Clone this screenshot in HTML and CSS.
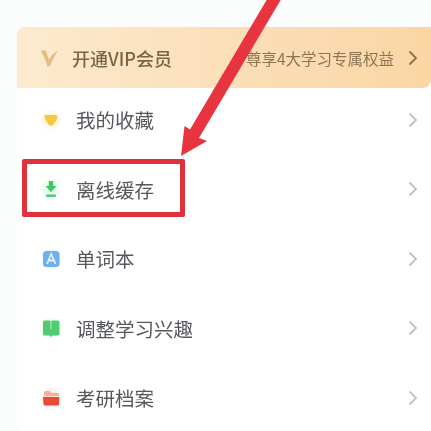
FILE: index.html
```html
<!DOCTYPE html>
<html lang="zh">
<head>
<meta charset="utf-8">
<title>我的</title>
<link rel="stylesheet" href="styles.css">
</head>
<body>
<main class="page">
  <section class="card">
    <div class="vip">
      <svg class="vip-logo" viewBox="0 0 24 24"><path d="M2 3 L8 3 C10 8 11 11 12 14 C14 10 17 6 23 3 C19 9 16 15 13 22 L10 22 C8 15 5 8 2 3 Z" fill="#e3bf82"/></svg>
      <span class="vip-title">开通VIP会员</span>
      <span class="vip-desc">尊享4大学习专属权益</span>
      <svg class="chev chev-vip" viewBox="0 0 10 16"><path d="M1.500 1.500 L8 8 L1.500 14.500" fill="none" stroke="#8a6f4a" stroke-width="1.8"/></svg>
    </div>
    <ul class="list">
      <li class="row">
        <span class="ico ico-yellow"><svg viewBox="0 0 24 24"><path d="M5.500 8.500 C5.500 7.500 6.500 7 7.500 7 L16.500 7 C17.500 7 18.500 7.500 18.500 8.500 C18.500 11.500 14.500 17 12 18 C9.500 17 5.500 11.500 5.500 8.500 Z" fill="#f5c93f"/></svg></span>
        <span class="label">我的收藏</span>
        <svg class="chev" viewBox="0 0 10 16"><path d="M1.500 1.500 L8 8 L1.500 14.500" fill="none" stroke="#bfc1c4" stroke-width="1.8"/></svg>
      </li>
      <li class="row">
        <span class="ico ico-green"><svg viewBox="0 0 24 24"><path d="M9.800 4 H14.200 V9 H17.500 L12 15 L6.500 9 H9.800 Z" fill="#40c765"/><rect x="7" y="17.500" width="10" height="2.500" rx="1" fill="#55c878"/></svg></span>
        <span class="label">离线缓存</span>
        <svg class="chev" viewBox="0 0 10 16"><path d="M1.500 1.500 L8 8 L1.500 14.500" fill="none" stroke="#bfc1c4" stroke-width="1.8"/></svg>
      </li>
      <li class="row">
        <span class="ico ico-blue"><svg viewBox="0 0 24 24"><rect x="4" y="4" width="16.500" height="16" rx="3.500" fill="#6fb0ec"/><path d="M8 17 L12.200 7 L16.500 17 M9.500 13.500 H15" fill="none" stroke="#e3f0fc" stroke-width="1.800"/></svg></span>
        <span class="label">单词本</span>
        <svg class="chev" viewBox="0 0 10 16"><path d="M1.500 1.500 L8 8 L1.500 14.500" fill="none" stroke="#bfc1c4" stroke-width="1.8"/></svg>
      </li>
      <li class="row">
        <span class="ico ico-mint"><svg viewBox="0 0 24 24"><path d="M4 6 C4 5 5 4.500 6 4.500 L11 4.500 L12 5.500 L13 4.500 L18 4.500 C19 4.500 20.500 5 20.500 6 L20.500 18 C20.500 19 19 19.500 18 19.500 L13.500 19.500 L12 21 L10.500 19.500 L6 19.500 C5 19.500 4 19 4 18 Z" fill="#52cc72"/><rect x="11.400" y="5" width="1.200" height="8" fill="#a8e8ba"/></svg></span>
        <span class="label">调整学习兴趣</span>
        <svg class="chev" viewBox="0 0 10 16"><path d="M1.500 1.500 L8 8 L1.500 14.500" fill="none" stroke="#bfc1c4" stroke-width="1.8"/></svg>
      </li>
      <li class="row">
        <span class="ico ico-red"><svg viewBox="0 0 24 24"><path d="M5 7 C5 5.500 6 5 7 5 L10.500 5 L12.500 7 L18.500 7 C19.500 7 20 7.500 20 8.500 L20 10 L5 10 Z" fill="#f4b28e"/><path d="M4 11 L20.500 11 L20 18 C19.900 19 19 19.500 18 19.500 L6.500 19.500 C5.500 19.500 4.600 19 4.500 18 Z" fill="#e94a38"/></svg></span>
        <span class="label">考研档案</span>
        <svg class="chev" viewBox="0 0 10 16"><path d="M1.500 1.500 L8 8 L1.500 14.500" fill="none" stroke="#bfc1c4" stroke-width="1.8"/></svg>
      </li>
    </ul>
  </section>
</main>
<div class="mark-box"></div>
<svg class="mark-arrow" viewBox="0 0 431 431"><path d="M269 -4 L283 -4 L199 138 L207 141 L181 156 L184.500 126 L190 129.500 Z" fill="#e8343f"/></svg>
</body>
</html>
```
FILE: styles.css
```css
html, body {
  margin: 0;
  padding: 0;
}
body {
  width: 431px;
  height: 431px;
  overflow: hidden;
  position: relative;
  background: #fbfcfc;
  font-family: "Noto Sans CJK SC", "Noto Sans", sans-serif;
}
.page {
  padding: 27px 0 0 17px;
  height: 404px;
  overflow: hidden;
}
.card {
  background: #fff;
  border-radius: 8px 0 0 8px;
  height: 100%;
}
.vip {
  height: 61px;
  display: flex;
  align-items: center;
  padding: 0 13px 0 22px;
  background: linear-gradient(90deg, #fdeacf 0%, #fbdfb9 50%, #fad6a4 100%);
  border-radius: 8px 0 8px 0;
  filter: blur(0.5px);
}
.vip-logo {
  width: 20px;
  height: 20px;
  flex: none;
}
.vip-title {
  margin-left: 13px;
  font-size: 18px;
  font-weight: 500;
  color: #7a6547;
}
.vip-desc {
  margin-left: auto;
  font-size: 15.500px;
  color: #8c7452;
}
.chev {
  width: 10px;
  height: 16px;
  flex: none;
  margin-left: auto;
}
.chev-vip {
  margin-left: 14px;
}
.list {
  list-style: none;
  margin: -3px 0 0;
  padding: 0;
}
.row {
  height: 69.500px;
  display: flex;
  align-items: center;
  padding: 0 13px 0 22px;
  filter: blur(0.5px);
}
.ico {
  width: 24px;
  height: 24px;
  flex: none;
  border-radius: 50%;
  filter: blur(0.3px);
}
.ico svg {
  width: 100%;
  height: 100%;
  display: block;
}
.ico-yellow { background: radial-gradient(circle closest-side, #fff3d6 30%, #ffffff 100%); }
.ico-green { background: radial-gradient(circle closest-side, #dff9e6 30%, #ffffff 100%); }
.ico-blue { background: radial-gradient(circle closest-side, #e3f0fc 40%, #ffffff 100%); }
.ico-mint { background: radial-gradient(circle closest-side, #dff9e6 40%, #ffffff 100%); }
.ico-red { background: radial-gradient(circle closest-side, #fce5e1 40%, #ffffff 100%); }
.label {
  margin-left: 13px;
  font-size: 19.500px;
  color: #55585c;
}
.mark-box {
  position: absolute;
  left: 22px;
  top: 159px;
  width: 153px;
  height: 48px;
  border: 5px solid #e0323c;
  border-radius: 2px;
}
.mark-arrow {
  position: absolute;
  left: 0;
  top: 0;
  width: 431px;
  height: 431px;
}
```
